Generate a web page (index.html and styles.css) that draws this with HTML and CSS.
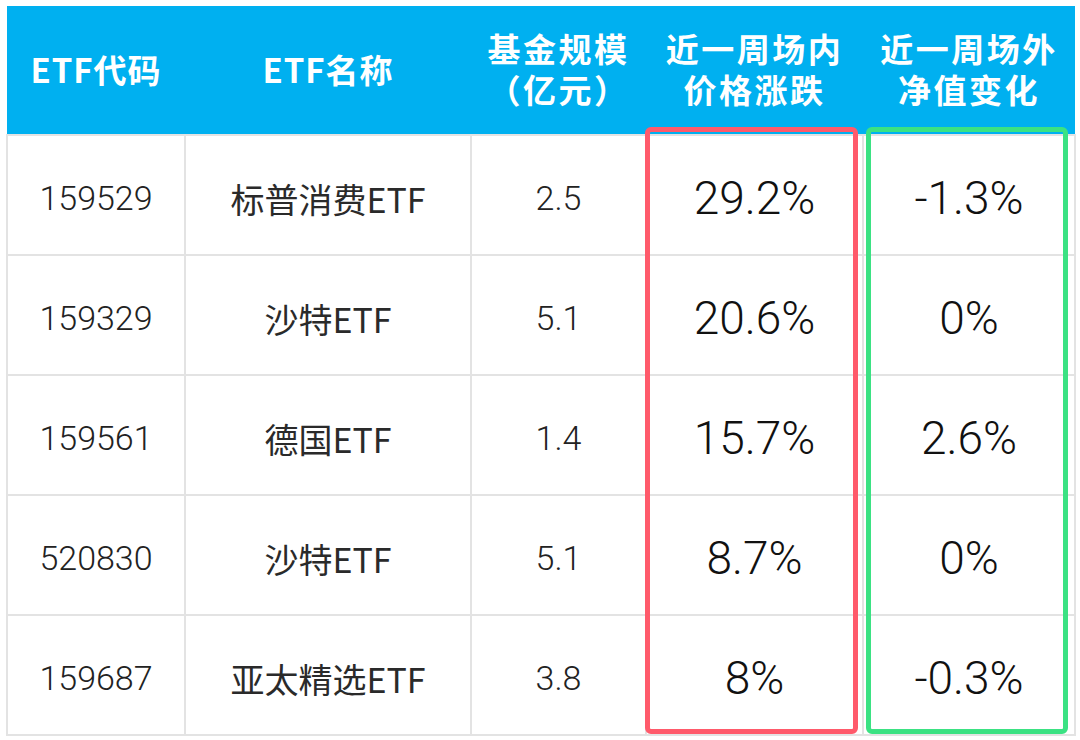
FILE: index.html
```html
<!DOCTYPE html>
<html lang="zh">
<head>
<meta charset="utf-8">
<link rel="stylesheet" href="styles.css">
</head>
<body>
<div class="wrap">
  <table class="etf">
    <colgroup>
      <col class="c1"><col class="c2"><col class="c3"><col class="c4"><col class="c5">
    </colgroup>
    <thead>
      <tr>
        <th><span class="ln lat">ETF代码</span></th>
        <th><span class="ln lat">ETF名称</span></th>
        <th><span class="ln">基金规模</span><span class="ln">（亿元）</span></th>
        <th><span class="ln">近一周场内</span><span class="ln">价格涨跌</span></th>
        <th><span class="ln">近一周场外</span><span class="ln">净值变化</span></th>
      </tr>
    </thead>
    <tbody>
      <tr><td class="num">159529</td><td class="name">标普消费ETF</td><td class="num">2.5</td><td class="big">29.2%</td><td class="big">-1.3%</td></tr>
      <tr><td class="num">159329</td><td class="name">沙特ETF</td><td class="num">5.1</td><td class="big">20.6%</td><td class="big">0%</td></tr>
      <tr><td class="num">159561</td><td class="name">德国ETF</td><td class="num">1.4</td><td class="big">15.7%</td><td class="big">2.6%</td></tr>
      <tr><td class="num">520830</td><td class="name">沙特ETF</td><td class="num">5.1</td><td class="big">8.7%</td><td class="big">0%</td></tr>
      <tr><td class="num">159687</td><td class="name">亚太精选ETF</td><td class="num">3.8</td><td class="big">8%</td><td class="big">-0.3%</td></tr>
    </tbody>
  </table>
  <div class="hl hl-red"></div>
  <div class="hl hl-green"></div>
</div>
</body>
</html>
```
FILE: styles.css
```css
html, body {
  margin: 0;
  padding: 0;
  background: #ffffff;
}
body {
  width: 1080px;
  height: 740px;
  overflow: hidden;
  font-family: "Noto Sans CJK SC", sans-serif;
}
.wrap {
  position: relative;
  padding: 6px 0 0 6px;
}
.etf {
  table-layout: fixed;
  border-collapse: collapse;
  width: 1068px;
}
.c1 { width: 178px; }
.c2 { width: 286px; }
.c3 { width: 175px; }
.c4 { width: 217px; }
.c5 { width: 212px; }
.etf th {
  background: #00b0f0;
  color: #ffffff;
  height: 126px;
  padding: 0 0 2px 0;
  font-size: 33px;
  font-weight: 700;
  letter-spacing: 2.5px;
  text-align: center;
  vertical-align: middle;
  border: none;
}
.ln {
  display: block;
  height: 41px;
  line-height: 41px;
  overflow: visible;
}
.ln.lat {
  letter-spacing: 1px;
}
.etf td {
  height: 112px;
  padding: 6px 0 0 0;
  border: 2px solid #e3e3e3;
  text-align: center;
  vertical-align: middle;
  color: #222222;
}
.etf td.num {
  font-family: Roboto, "Noto Sans CJK SC", sans-serif;
  font-weight: 300;
  font-size: 34px;
}
.etf td.name {
  font-size: 34px;
  font-weight: 400;
  color: #2a2a2a;
}
.etf td.big {
  font-family: Roboto, "Noto Sans CJK SC", sans-serif;
  font-weight: 300;
  font-size: 46px;
  color: #111111;
}
.hl {
  position: absolute;
  top: 127px;
  height: 607px;
  box-sizing: border-box;
  border: 5px solid;
  border-radius: 6px;
}
.hl-red {
  left: 645px;
  width: 213px;
  border-color: #ff5a6b;
}
.hl-green {
  left: 866px;
  width: 202px;
  border-color: #3be283;
}
```
